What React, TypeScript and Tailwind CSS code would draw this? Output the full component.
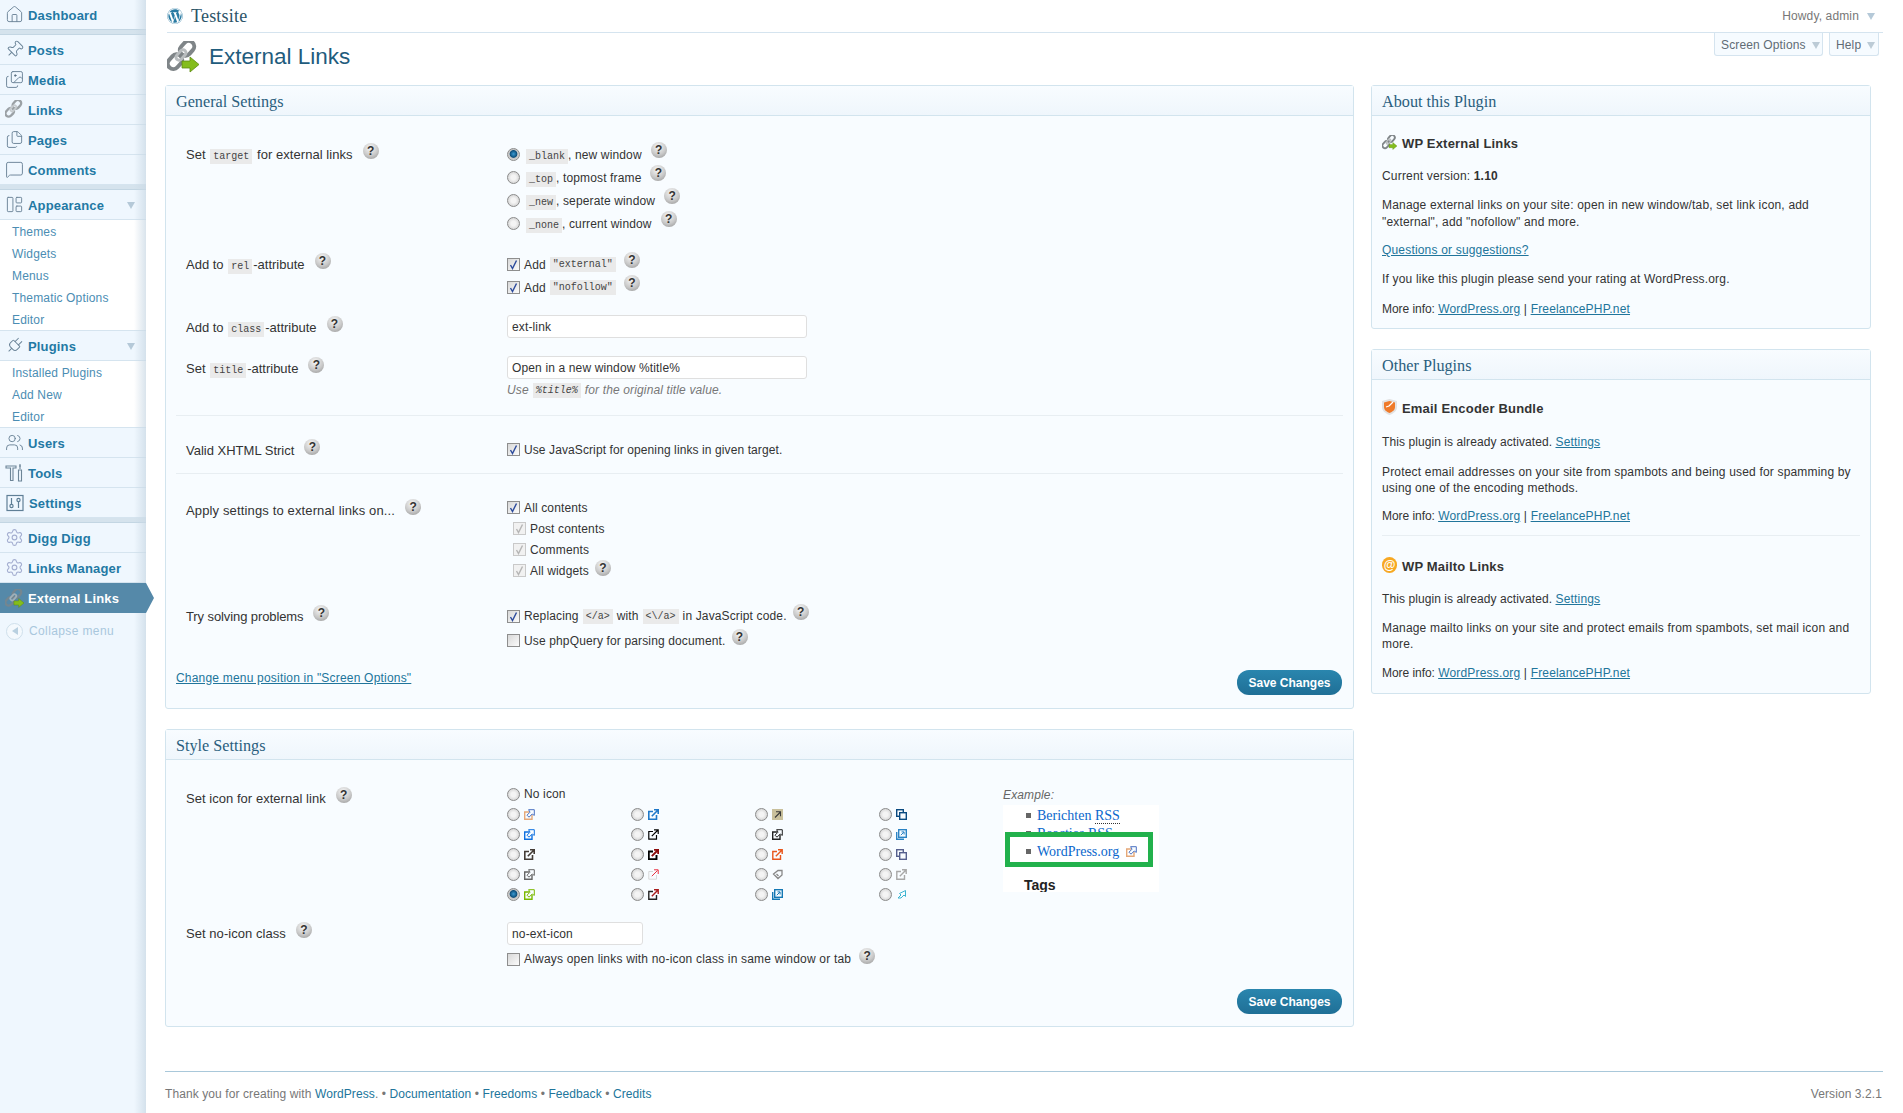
import React from "react";
import { Home, Pin, Images, Files, MessageSquare, LayoutPanelLeft, Plug, Users, Settings } from "lucide-react";
import { FaWordpress } from "react-icons/fa";

const sans = "font-['Liberation_Sans',Arial,sans-serif]";
const serif = "font-['Liberation_Serif',Georgia,serif]";

function Chain({ size, dim, plain }: { size: number; dim?: boolean; plain?: boolean }) {
  return (
    <svg width={size} height={size} viewBox="0 0 32 32" fill="none" className="shrink-0">
      <g transform="rotate(-48 14 14)" opacity={dim ? 0.75 : 1}>
        <rect x="-3" y="8.5" width="16" height="11" rx="5.500" stroke="#7f8588" strokeWidth="4" />
        <rect x="15" y="8.5" width="16" height="11" rx="5.500" stroke="#7f8588" strokeWidth="4" />
        <rect x="8" y="11" width="12" height="6" rx="3" stroke="#b9bdbf" strokeWidth="3" />
      </g>
      {!plain && <path d="M15 20h8v-4l9 7.500-9 7.500v-4h-8z" fill="#84bd1c" stroke="#5d8c12" strokeWidth="0.8" />}
    </svg>
  );
}

function ToolsIcon() {
  return (
    <svg width="20" height="20" viewBox="0 0 20 20" fill="none" stroke="#6d8597" strokeWidth="1.1">
      <path d="M1 3h10v2H8v12.500H5.500V5H1z" />
      <path d="M15 1v5M13.500 7h3v11h-3z" />
      <path d="M14 3h2" />
    </svg>
  );
}

function SettingsIcon() {
  return (
    <svg width="18" height="18" viewBox="0 0 18 18" fill="none" stroke="#5f7f96" strokeWidth="1.2">
      <rect x="1" y="1.5" width="16" height="15" />
      <circle cx="5.5" cy="12" r="1.6" />
      <path d="M5.5 4v6.400M12.500 7.600V14" />
      <circle cx="12.5" cy="6" r="1.6" />
    </svg>
  );
}

function Tri({ c = "#b5c9d8" }: { c?: string }) {
  return (
    <svg width="8" height="8" viewBox="0 0 8 8" className="shrink-0">
      <path d="M0 1h8L4 8z" fill={c} />
    </svg>
  );
}

function NavRow({ icon, label, arrow, x = 28, gear }: { icon: React.ReactNode; label: string; arrow?: boolean; x?: number; gear?: boolean }) {
  return (
    <div className="relative flex h-[30px] items-center border-b border-[#d5e4ef] bg-[#eff7fe] pr-[11px]">
      <span className={`flex w-[28px] shrink-0 justify-center ${gear ? "" : "pl-[1px]"}`}>{icon}</span>
      <span className="flex-1 pt-[2px] text-[13px] font-bold tracking-[0.16px] text-[#2379a4]" style={{ marginLeft: x - 28 }}>{label}</span>
      {arrow && <Tri />}
    </div>
  );
}

function Sep() {
  return <div className="h-[6px] border-y border-[#c3d6e3] bg-[#d5e3ed]" />;
}

function Sub({ items }: { items: string[] }) {
  return (
    <div className="border-b border-[#d5e4ef] bg-white">
      {items.map((t, i) => (
        <div key={i} className="flex h-[22px] items-center pl-[12px] pt-[2px] text-[12px] tracking-[0.16px] text-[#4b8db3]">{t}</div>
      ))}
    </div>
  );
}

const ic = { size: 19, stroke: "#6b8498", strokeWidth: 1.2 };

function Sidebar() {
  return (
    <aside className="relative w-[146px] shrink-0 bg-[#eff7fe]">
      <div className="flex h-[29px] items-center bg-[#eff7fe]">
        <span className="flex w-[28px] justify-center"><Home {...ic} /></span>
        <span className="pt-[2px] text-[13px] font-bold tracking-[0.16px] text-[#2379a4]">Dashboard</span>
      </div>
      <Sep />
      <NavRow icon={<Pin {...ic} className="rotate-45" />} label="Posts" />
      <NavRow icon={<Images {...ic} />} label="Media" />
      <NavRow icon={<Chain size={19} dim plain />} label="Links" />
      <NavRow icon={<Files {...ic} />} label="Pages" />
      <div className="h-[29px]"><NavRow icon={<MessageSquare {...ic} />} label="Comments" /></div>
      <Sep />
      <NavRow icon={<LayoutPanelLeft {...ic} />} label="Appearance" arrow />
      <Sub items={["Themes", "Widgets", "Menus", "Thematic Options", "Editor"]} />
      <NavRow icon={<Plug {...ic} className="rotate-45" />} label="Plugins" arrow />
      <Sub items={["Installed Plugins", "Add New", "Editor"]} />
      <NavRow icon={<Users {...ic} />} label="Users" />
      <NavRow icon={<ToolsIcon />} label="Tools" />
      <div className="h-[29px]"><NavRow icon={<SettingsIcon />} label="Settings" x={29} /></div>
      <Sep />
      <NavRow icon={<Settings size={19} stroke="#a4aed0" strokeWidth={1.4} />} label="Digg Digg" gear />
      <NavRow icon={<Settings size={19} stroke="#a4aed0" strokeWidth={1.4} />} label="Links Manager" gear />
      <div className="relative z-10 flex h-[30px] items-center bg-[#5589a9]">
        <span className="flex w-[28px] justify-center"><Chain size={19} dim /></span>
        <span className="pt-[2px] text-[13px] font-bold tracking-[0.16px] text-white">External Links</span>
        <span className="absolute left-[146px] top-0 h-0 w-0 border-y-[15px] border-l-[8px] border-y-transparent border-l-[#5589a9]" />
      </div>
      <div className="flex h-[36px] items-center">
        <span className="ml-[6px] flex h-[17px] w-[17px] items-center justify-center rounded-full border border-[#cfe0ec] bg-[#f4f9fd]">
          <svg width="8" height="8" viewBox="0 0 8 8"><path d="M7 0v8L1 4z" fill="#b9d0e0" /></svg>
        </span>
        <span className="ml-[6px] text-[12px] tracking-[0.38px] text-[#a9c7dd]">Collapse menu</span>
      </div>
      <div className="pointer-events-none absolute bottom-0 right-0 top-0 w-[12px] bg-gradient-to-r from-transparent to-[#c9d8e4]/70" />
    </aside>
  );
}

function Help({ className = "" }: { className?: string }) {
  return (
    <span className={`inline-flex h-[16px] w-[16px] shrink-0 items-center justify-center rounded-full bg-[radial-gradient(circle_at_45%_30%,#f7f7f7,#c8c8c8_55%,#8f8f8f)] text-[12px] font-bold leading-none tracking-normal text-[#333] ${className}`}>?</span>
  );
}

function Code({ children, tight }: { children: React.ReactNode; tight?: boolean }) {
  return <code className={`${tight ? "mx-[1px]" : "mx-[4px]"} inline-block h-[15px] bg-[#eaeaea] px-[3px] font-['Liberation_Mono',monospace] text-[10px] leading-[15px] tracking-normal text-[#444]`}>{children}</code>;
}

function Radio({ on }: { on?: boolean }) {
  return (
    <span className={`inline-block h-[13px] w-[13px] shrink-0 rounded-full border border-[#8b8b8b] ${on ? "bg-[radial-gradient(circle_at_50%_45%,#3a9ad2_0%,#0d4f7c_42%,#c4c4c4_52%,#e6e6e6_100%)]" : "bg-[radial-gradient(circle,#f4f4f4_30%,#c6c6c6_100%)]"}`} />
  );
}

function Check({ on, off }: { on?: boolean; off?: boolean }) {
  return (
    <span className={`flex h-[13px] w-[13px] shrink-0 items-center justify-center border ${off ? "border-[#c9c9c9] bg-[#f1f1f1]" : "border-[#8e8e8e] bg-[linear-gradient(135deg,#d8d8d8,#fbfbfb)]"}`}>
      {on && (
        <svg width="11" height="11" viewBox="0 0 11 11" fill="none">
          <path d="M2.5 6l2 3.500L8.500 1.500" stroke={off ? "#b5b5b5" : "#2b4a9c"} strokeWidth="1.4" />
        </svg>
      )}
    </span>
  );
}

function Label({ children, pt = 2, track = "" }: { children: React.ReactNode; pt?: number; track?: string }) {
  return (
    <div className={`flex h-[23px] w-[321px] shrink-0 items-center text-[13px] text-[#333] ${track}`} style={{ paddingTop: pt }}>
      <span>{children}</span>
      <Help className="ml-[10px] -translate-y-[4px]" />
    </div>
  );
}

function Panel({ title, children, className = "" }: { title: string; children: React.ReactNode; className?: string }) {
  return (
    <section className={`rounded-[3px] border border-[#d2e4ee] bg-[#f8fcff] ${className}`}>
      <h3 className={`flex h-[30px] items-center border-b border-[#d2e4ee] bg-gradient-to-b from-[#f8fcff] to-[#eff6fc] px-[10px] pt-[4px] text-[16.2px] font-normal tracking-normal text-[#2a5e7d] ${serif}`}>{title}</h3>
      {children}
    </section>
  );
}

function SaveBtn() {
  return (
    <span className="flex h-[25px] w-[105px] items-center justify-center rounded-[12px] bg-gradient-to-b from-[#2a86ae] to-[#1f6f96] text-[12px] font-bold tracking-normal text-white">Save Changes</span>
  );
}

function TextInput({ value, w }: { value: string; w: string }) {
  return <div className={`flex h-[23px] items-center rounded-[3px] border border-[#dfdfdf] bg-white pl-[4px] text-[12px] text-[#333] ${w}`}>{value}</div>;
}

type K = "arrow" | "hollow" | "window" | "tile" | "tag" | "framed" | "bare";
function Ext({ box, arrow, kind = "arrow", w = 1.4 }: { box: string; arrow: string; kind?: K; w?: number }) {
  return (
    <svg width="11" height="11" viewBox="0 0 11 11" fill="none" className="shrink-0">
      {kind === "arrow" && (
        <>
          <path d="M5 2.500H.8v7.700h7.700V6" stroke={box} strokeWidth={w} />
          <path d="M3.800 7.200L9.500 1.500M6 .8h4.200V5" stroke={arrow} strokeWidth={w} />
        </>
      )}
      {kind === "hollow" && (
        <>
          <path d="M5 3H.7v7.300H8V6" stroke={box} strokeWidth={w} />
          <path d="M3 6.200L6 3.200 4.600.7h5.700v5.700L8.200 5 5 8.200z" fill="#f8fcff" stroke={arrow} strokeWidth="1" />
        </>
      )}
      {kind === "bare" && <path d="M2 9l3-3-1.500-1.500L9.500 1.500v6L8 6l-3 3z" stroke={arrow} strokeWidth="1" />}
      {kind === "window" && (
        <>
          <rect x=".7" y=".7" width="6.6" height="6.6" stroke={box} strokeWidth={w} />
          <rect x="3.7" y="3.7" width="6.6" height="6.6" fill="#f8fcff" stroke={arrow} strokeWidth={w} />
        </>
      )}
      {kind === "tile" && (
        <>
          <rect width="11" height="11" fill={box} />
          <path d="M3 8.500L8 3.500M4 2.800h4.500v4.500" stroke={arrow} strokeWidth="1.1" />
        </>
      )}
      {kind === "tag" && <path d="M1.500 5L6 1.500h4V6L6 9.500zM4.500 5l2 2" stroke={arrow} strokeWidth="1.3" />}
      {kind === "framed" && (
        <>
          <path d="M.7 3v7.300H8" stroke={box} strokeWidth={w} />
          <rect x="2.7" y=".7" width="7.6" height="7.6" stroke={box} strokeWidth={w} />
          <path d="M4.800 6.200l3-3M5.500 2.900h2.600v2.600" stroke={arrow} strokeWidth="1" />
        </>
      )}
    </svg>
  );
}

const iconRows: React.ReactNode[][] = [
  [<Ext box="#e5a878" arrow="#4a70c0" kind="hollow" />, <Ext box="#1f78c8" arrow="#1f78c8" w={1.6} />, <Ext box="#c9c09c" arrow="#3a3a3a" kind="tile" />, <Ext box="#0a4a80" arrow="#0a4a80" kind="window" />],
  [<Ext box="#0f70e0" arrow="#0f70e0" kind="hollow" />, <Ext box="#000" arrow="#000" w={1.2} />, <Ext box="#222" arrow="#222" kind="hollow" />, <Ext box="#2b83c4" arrow="#2b83c4" kind="framed" />],
  [<Ext box="#443c36" arrow="#443c36" w={1.6} />, <Ext box="#000" arrow="#8c0c0c" w={1.9} />, <Ext box="#e8561c" arrow="#e8561c" />, <Ext box="#55608e" arrow="#55608e" kind="window" />],
  [<Ext box="#666" arrow="#666" kind="hollow" />, <Ext box="#d8d8d8" arrow="#e83040" w={1} />, <Ext box="#888" arrow="#888" kind="tag" />, <Ext box="#a8a8a8" arrow="#a8a8a8" />],
  [<Ext box="#7ab800" arrow="#7ab800" kind="hollow" />, <Ext box="#222" arrow="#a81c1c" />, <Ext box="#1578b4" arrow="#1578b4" kind="framed" />, <Ext box="#3cb4d0" arrow="#3cb4d0" kind="bare" />],
];

function Example() {
  return (
    <div className="mt-[1px] w-[156px]">
      <div className="flex h-[20px] items-center text-[12px] italic text-[#666]">Example:</div>
      <div className="relative h-[87px] overflow-hidden bg-white tracking-normal">
        <div className="flex h-[18px] items-center pl-[23px] pt-[2px]">
          <span className="h-[5px] w-[5px] bg-[#666]" />
          <span className={`ml-[6px] text-[14px] text-[#0b67cc] ${serif}`}>Berichten <span className="border-b border-dotted border-[#333]">RSS</span></span>
        </div>
        <div className="flex h-[18px] items-center pl-[23px] pt-[2px]">
          <span className="h-[5px] w-[5px] bg-[#666]" />
          <span className={`ml-[6px] text-[14px] text-[#0b67cc] ${serif}`}>Reacties <span className="border-b border-dotted border-[#333]">RSS</span></span>
        </div>
        <div className="mt-[34px] pl-[21px] text-[14px] font-bold leading-[20px] text-[#222]">Tags</div>
        <div className="absolute left-[2px] top-[27px] flex h-[35px] w-[148px] items-center border-[5px] border-[#22b14c] bg-white pl-[16px] pt-[3px]">
          <span className="h-[5px] w-[5px] shrink-0 bg-[#666]" />
          <span className={`ml-[6px] mr-[7px] text-[14px] text-[#0b67cc] ${serif}`}>WordPress.org</span>
          <Ext box="#e5a878" arrow="#4a70c0" kind="hollow" />
        </div>
      </div>
    </div>
  );
}

function P({ children, mt, lh = "leading-[16px]" }: { children: React.ReactNode; mt: string; lh?: string }) {
  return <p className={`${mt} ${lh} text-[12px] text-[#333]`}>{children}</p>;
}
function A({ children }: { children: React.ReactNode }) {
  return <a className="text-[#21759b] underline">{children}</a>;
}
function PH({ icon, children, mt }: { icon: React.ReactNode; children: React.ReactNode; mt: string }) {
  return (
    <h4 className={`${mt} flex h-[20px] items-center text-[13px] font-bold text-[#333]`}>
      <span className="mr-[5px] flex w-[15px] -translate-y-[2px] justify-center">{icon}</span>
      {children}
    </h4>
  );
}
const More = () => <span className="tracking-[-0.05px]">More info: </span>;
const Activated = () => <span className="tracking-[0.08px]">This plugin is already activated. </span>;

function App() {
  return (
    <div className={`flex min-h-[1113px] w-full bg-white tracking-[0.14px] ${sans}`}>
      <Sidebar />
      <main className="min-w-0 flex-1 pl-[19px] pr-[20px]">
        <header className="ml-[2px] flex h-[33px] items-center border-b border-[#d5e4ef]">
          <FaWordpress size={16} color="#2a7ba3" />
          <span className={`ml-[8px] text-[18px] tracking-[0.2px] text-[#2c5468] ${serif}`}>Testsite</span>
          <span className="ml-auto mr-[8px] text-[12px] text-[#777]">Howdy, admin</span>
          <span className="mr-[8px]"><Tri /></span>
        </header>
        <div className="flex h-[52px] items-start">
          <div className="ml-[2px] mt-[7px] flex items-center">
            <Chain size={32} />
            <h2 className="ml-[10px] text-[22.5px] font-normal tracking-normal text-[#1f5c7d]">External Links</h2>
          </div>
          <div className="ml-auto mr-[4px] flex gap-[6px]">
            <div className="flex h-[23px] w-[109px] items-center rounded-b-[3px] border border-t-0 border-[#d5e4ef] bg-[#f6fbff] pl-[6px] pt-[1px] text-[12px] text-[#5f6b75]">
              <span>Screen Options</span><span className="ml-[6px]"><Tri c="#bccbd6" /></span>
            </div>
            <div className="flex h-[23px] w-[50px] items-center rounded-b-[3px] border border-t-0 border-[#d5e4ef] bg-[#f6fbff] pl-[6px] pt-[1px] text-[12px] text-[#5f6b75]">
              <span>Help</span><span className="ml-[6px]"><Tri c="#bccbd6" /></span>
            </div>
          </div>
        </div>

        <div className="flex items-start gap-[17px]">
          <div className="w-[1189px] shrink-0">
            <Panel title="General Settings">
              <div className="px-[10px] pb-[13px] pt-[27px]">
                <div className="flex pl-[10px]">
                  <Label pt={0} track="tracking-[0.05px]">Set <Code tight>target</Code> for external links</Label>
                  <div className="text-[12px] text-[#333]">
                    {[
                      ["_blank", ", new window", true],
                      ["_top", ", topmost frame", false],
                      ["_new", ", seperate window", false],
                      ["_none", ", current window", false],
                    ].map(([c, t, on], i) => (
                      <div key={i} className="flex h-[23px] items-center">
                        <Radio on={on as boolean} />
                        <span className="ml-[2px]"><Code>{c as string}</Code></span>
                        <span className="-ml-[4px]">{t as string}</span>
                        <Help className="ml-[9px] -translate-y-[5px]" />
                      </div>
                    ))}
                  </div>
                </div>
                <div className="mt-[18px] flex pl-[10px]">
                  <Label pt={0} track="tracking-[0px]">Add to <Code tight>rel</Code><span>-attribute</span></Label>
                  <div className="text-[12px] text-[#333]">
                    <div className="flex h-[23px] items-center"><Check on /><span className="ml-[4px]">Add</span><Code>"external"</Code><Help className="ml-[4px] -translate-y-[5px]" /></div>
                    <div className="flex h-[23px] items-center"><Check on /><span className="ml-[4px]">Add</span><Code>"nofollow"</Code><Help className="ml-[4px] -translate-y-[5px]" /></div>
                  </div>
                </div>
                <div className="mt-[16px] flex pl-[10px]">
                  <Label pt={2} track="tracking-[0px]">Add to <Code tight>class</Code><span>-attribute</span></Label>
                  <TextInput value="ext-link" w="w-[300px]" />
                </div>
                <div className="mt-[18px] flex pl-[10px]">
                  <Label pt={2} track="tracking-[0px]">Set <Code tight>title</Code><span>-attribute</span></Label>
                  <div>
                    <TextInput value="Open in a new window %title%" w="w-[300px]" />
                    <div className="mt-[3px] flex h-[16px] items-center text-[12px] italic text-[#777]">Use<Code>%title%</Code>for the original title value.</div>
                  </div>
                </div>
                <div className="mt-[17px] h-px bg-[#e8eef2]" />
                <div className="mt-[22px] flex pl-[10px]">
                  <Label track="tracking-[0px]">Valid XHTML Strict</Label>
                  <div className="flex h-[23px] items-center text-[12px] tracking-[0.1px] text-[#333]"><Check on /><span className="ml-[4px]">Use JavaScript for opening links in given target.</span></div>
                </div>
                <div className="mt-[12px] h-px bg-[#e8eef2]" />
                <div className="mt-[23px] flex pl-[10px]">
                  <Label pt={4}>Apply settings to external links on...</Label>
                  <div className="text-[12px] text-[#333]">
                    <div className="flex h-[21px] items-center"><Check on /><span className="ml-[4px]">All contents</span></div>
                    <div className="flex h-[21px] items-center pl-[6px]"><Check on off /><span className="ml-[4px]">Post contents</span></div>
                    <div className="flex h-[21px] items-center pl-[6px]"><Check on off /><span className="ml-[4px]">Comments</span></div>
                    <div className="flex h-[21px] items-center pl-[6px]"><Check on off /><span className="ml-[4px]">All widgets</span><Help className="ml-[6px] -translate-y-[3px]" /></div>
                  </div>
                </div>
                <div className="mt-[23px] flex pl-[10px]">
                  <Label pt={3} track="tracking-[-0.1px]">Try solving problems</Label>
                  <div className="text-[12px] text-[#333]">
                    <div className="flex h-[24px] items-center"><Check on /><span className="ml-[4px]">Replacing</span><Code>&lt;/a&gt;</Code><span>with</span><Code>&lt;\/a&gt;</Code><span>in JavaScript code.</span><Help className="ml-[6px] -translate-y-[4px]" /></div>
                    <div className="flex h-[25px] items-center"><Check /><span className="ml-[4px]">Use phpQuery for parsing document.</span><Help className="ml-[6px] -translate-y-[4px]" /></div>
                  </div>
                </div>
                <div className="mt-[17px] flex items-start justify-between pr-[1px]">
                  <span className="-translate-y-[5px] tracking-[0.2px]"><A><span className="text-[12px] leading-[16px]">Change menu position in "Screen Options"</span></A></span>
                  <SaveBtn />
                </div>
              </div>
            </Panel>

            <Panel title="Style Settings" className="mt-[20px]">
              <div className="px-[10px] pb-[12px] pt-[24px]">
                <div className="flex pl-[10px]">
                  <Label pt={6} track="tracking-[0.04px]">Set icon for external link</Label>
                  <div className="w-[496px] shrink-0 text-[12px] text-[#333]">
                    <div className="flex h-[20px] items-center"><Radio /><span className="ml-[4px]">No icon</span></div>
                    <div className="grid grid-cols-[124px_124px_124px_124px]">
                      {iconRows.flatMap((row, r) =>
                        row.map((icon, c) => (
                          <div key={`${r}-${c}`} className="flex h-[20px] items-center gap-[4px]">
                            <Radio on={r === 4 && c === 0} />
                            {icon}
                          </div>
                        ))
                      )}
                    </div>
                  </div>
                  <Example />
                </div>
                <div className="mt-[18px] flex pl-[10px]">
                  <Label pt={0} track="tracking-[0.05px]">Set no-icon class</Label>
                  <div>
                    <TextInput value="no-ext-icon" w="w-[136px]" />
                    <div className="mt-[4px] flex h-[20px] items-center text-[12px] tracking-[0.19px] text-[#333]">
                      <Check /><span className="ml-[4px] whitespace-nowrap">Always open links with no-icon class in same window or tab</span><Help className="ml-[8px] -translate-y-[3px]" />
                    </div>
                  </div>
                </div>
                <div className="mt-[20px] flex justify-end pr-[1px]"><SaveBtn /></div>
              </div>
            </Panel>
          </div>

          <div className="w-[500px] shrink-0 tracking-[0.18px]">
            <Panel title="About this Plugin">
              <div className="px-[10px] pb-[10px] pt-[18px]">
                <PH mt="" icon={<Chain size={15} />}>WP External Links</PH>
                <P mt="mt-[14px]" lh="leading-[17px]">Current version: <b>1.10</b></P>
                <P mt="mt-[12px]" lh="leading-[17px]">Manage external links on your site: open in new window/tab, set link icon, add "external", add "nofollow" and more.</P>
                <P mt="mt-[11px]" lh="leading-[17px]"><A>Questions or suggestions?</A></P>
                <P mt="mt-[12px]" lh="leading-[17px]">If you like this plugin please send your rating at WordPress.org.</P>
                <P mt="mt-[13px]" lh="leading-[17px]"><More /><A>WordPress.org</A> | <A>FreelancePHP.net</A></P>
              </div>
            </Panel>
            <Panel title="Other Plugins" className="mt-[20px]">
              <div className="px-[10px] pb-[12px] pt-[19px]">
                <PH mt="" icon={
                  <svg width="15" height="16" viewBox="0 0 15 16"><path d="M7.500 0L15 2v6c0 4-3.500 6.500-7.500 8C3.500 14.500 0 12 0 8V2z" fill="#e2e2e2" /><path d="M7.500 2L13 3.500V8c0 3-2.500 4.800-5.500 6C4.500 12.800 2 11 2 8V3.500z" fill="#ef7a2a" /><path d="M4 8l3-1 4-4" stroke="#fff" strokeWidth="1.300" fill="none" /></svg>
                }>Email Encoder Bundle</PH>
                <P mt="mt-[15px]"><Activated /><A>Settings</A></P>
                <P mt="mt-[14px]">Protect email addresses on your site from spambots and being used for spamming by using one of the encoding methods.</P>
                <P mt="mt-[12px]"><More /><A>WordPress.org</A> | <A>FreelancePHP.net</A></P>
                <div className="mt-[11px] h-px bg-[#e8eef2]" />
                <PH mt="mt-[21px]" icon={
                  <span className="flex h-[16px] w-[16px] items-center justify-center rounded-full bg-[#f7a823] text-[12px] font-bold leading-none tracking-normal text-white">@</span>
                }>WP Mailto Links</PH>
                <P mt="mt-[14px]"><Activated /><A>Settings</A></P>
                <P mt="mt-[13px]">Manage mailto links on your site and protect emails from spambots, set mail icon and more.</P>
                <P mt="mt-[13px]"><More /><A>WordPress.org</A> | <A>FreelancePHP.net</A></P>
              </div>
            </Panel>
          </div>
        </div>

        <footer className="mt-[44px] flex h-[41px] items-center border-t border-[#a9c8da] pt-[4px] text-[12px] tracking-[0.09px] text-[#777]">
          <span>Thank you for creating with <a className="text-[#21759b]">WordPress</a>. • <a className="text-[#21759b]">Documentation</a> • <a className="text-[#21759b]">Freedoms</a> • <a className="text-[#21759b]">Feedback</a> • <a className="text-[#21759b]">Credits</a></span>
          <span className="ml-auto mr-[1px]">Version 3.2.1</span>
        </footer>
      </main>
    </div>
  );
}

export default App;
